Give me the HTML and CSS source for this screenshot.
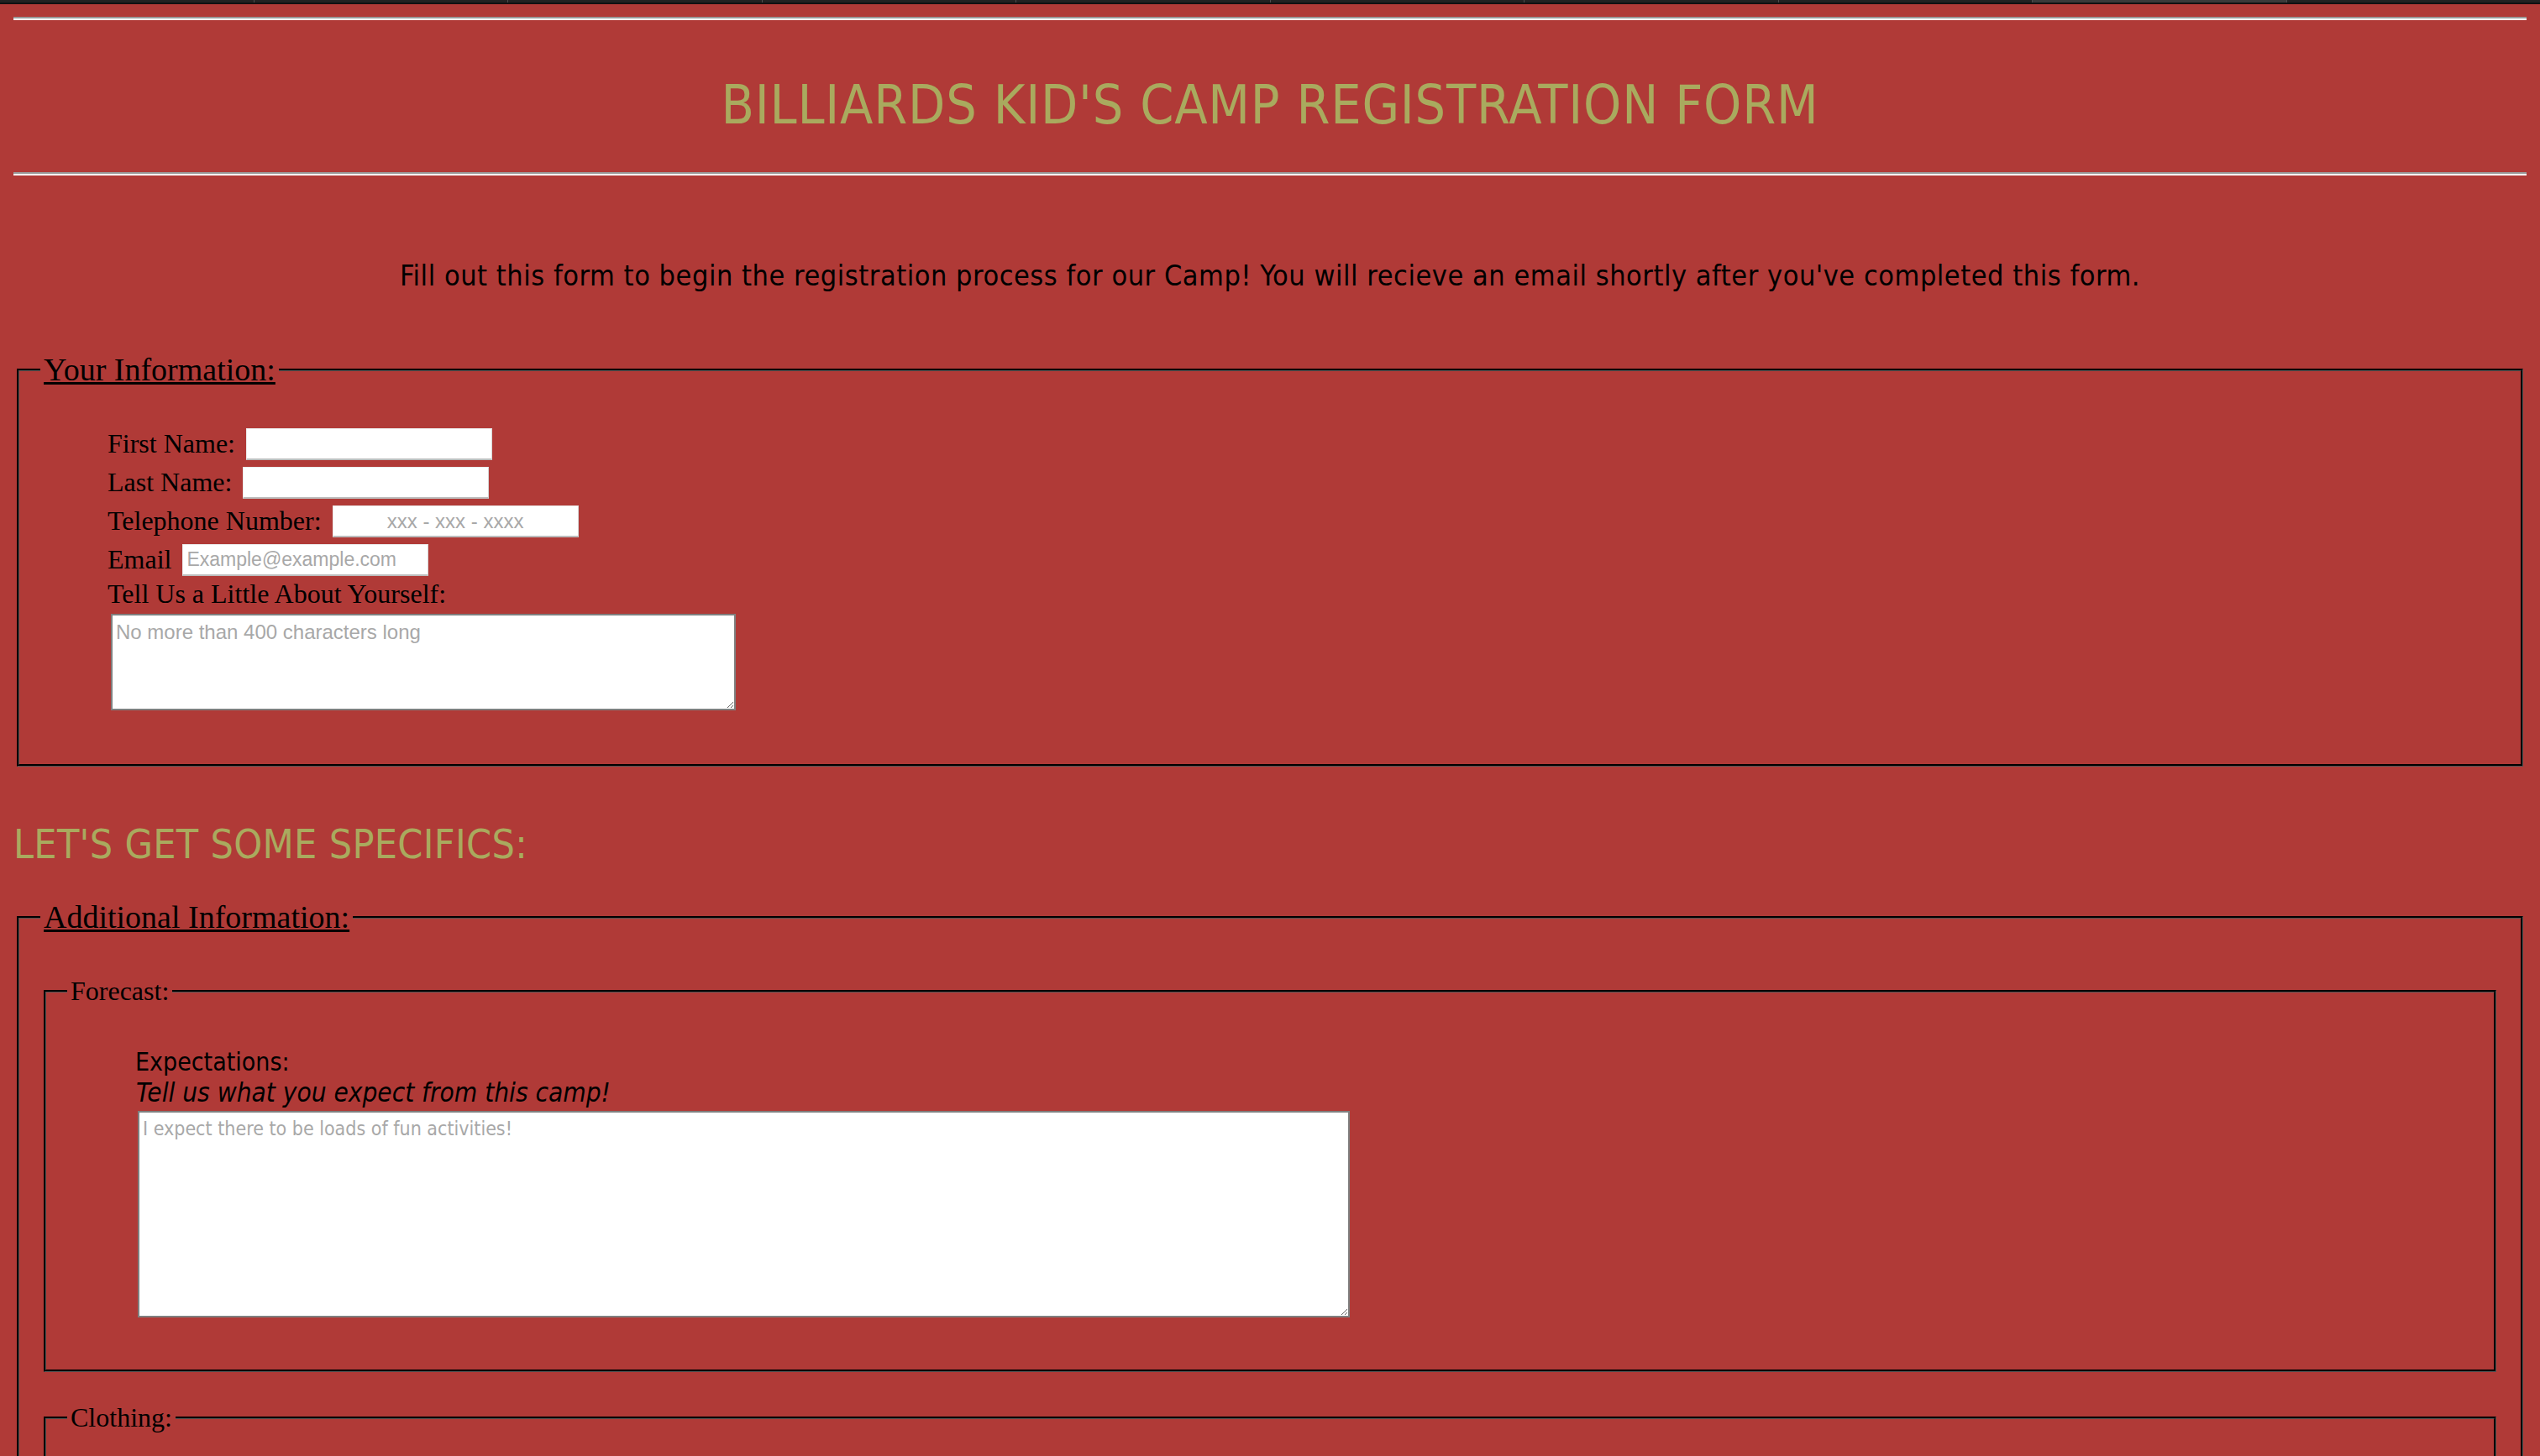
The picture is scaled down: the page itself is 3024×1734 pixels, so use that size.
FILE: index.html
```html
<!DOCTYPE html>
<html lang="en">
<head>
<meta charset="utf-8">
<title>Billiards Kid's Camp Registration Form</title>
<link rel="stylesheet" href="styles.css">
</head>
<body>
<div class="tabstrip">
  <span class="tab"></span><span class="tab"></span><span class="tab"></span><span class="tab"></span><span class="tab"></span>
  <span class="tab"></span><span class="tab"></span><span class="tab"></span><span class="tab tab-active"></span><span class="tab"></span>
</div>
<div class="page">
  <hr class="rule rule-top">
  <h1 class="title">BILLIARDS KID'S CAMP REGISTRATION FORM</h1>
  <hr class="rule">
  <p class="intro">Fill out this form to begin the registration process for our Camp! You will recieve an email shortly after you've completed this form.</p>

  <form class="form">
    <fieldset class="group group-info">
      <legend class="group-title">Your Information:</legend>
      <div class="fields">
        <div class="row"><label class="lbl" for="fname">First Name:</label><input class="box" id="fname" type="text"></div>
        <div class="row"><label class="lbl" for="lname">Last Name:</label><input class="box" id="lname" type="text"></div>
        <div class="row"><label class="lbl" for="tel">Telephone Number:</label><input class="box box-center" id="tel" type="tel" placeholder="xxx - xxx - xxxx"></div>
        <div class="row"><label class="lbl" for="email">Email</label><input class="box" id="email" type="email" placeholder="Example@example.com"></div>
        <label class="lbl lbl-block" for="about">Tell Us a Little About Yourself:</label>
        <textarea class="about" id="about" placeholder="No more than 400 characters long"></textarea>
      </div>
    </fieldset>

    <h2 class="subtitle">LET'S GET SOME SPECIFICS:</h2>

    <fieldset class="group group-extra">
      <legend class="group-title">Additional Information:</legend>
      <fieldset class="sub sub-forecast">
        <legend class="sub-title">Forecast:</legend>
        <div class="fields">
          <div class="q-label">Expectations:</div>
          <div class="q-hint">Tell us what you expect from this camp!</div>
          <textarea class="expect" placeholder="I expect there to be loads of fun activities!"></textarea>
        </div>
      </fieldset>
      <fieldset class="sub">
        <legend class="sub-title">Clothing:</legend>
        <div class="fields">
          <div class="q-label">T-Shirt Size:</div>
          <div class="q-hint">Pick the size that fits best!</div>
          <select class="size">
            <option>Small</option>
            <option>Medium</option>
            <option>Large</option>
          </select>
        </div>
      </fieldset>
    </fieldset>
  </form>
</div>
</body>
</html>
```

FILE: styles.css
```css
html, body {
  margin: 0;
  padding: 0;
  background: #b03a37;
}

body {
  font-family: "Liberation Serif", "Times New Roman", serif;
  color: #000;
}

.tabstrip {
  display: flex;
  height: 3px;
  background: #222222;
  border-bottom: 2px solid #111111;
}

.tab {
  flex: 1;
  border-left: 1px solid #4d4d4d;
}

.tab:first-child {
  border-left: 0;
}

.tab-active {
  background: #3a3a3a;
}

.page {
  padding: 0 16px 200px;
}

.rule {
  margin: 0;
  height: 0;
  border: 0;
  border-top: 2px solid #9a9a9a;
  border-bottom: 2px solid #ffffff;
}

.rule-top {
  margin-top: 15px;
}

.title {
  margin: 63px 0 41px;
  font-family: "DejaVu Sans Condensed", "DejaVu Sans", sans-serif;
  font-weight: normal;
  font-size: 64px;
  line-height: 77px;
  letter-spacing: 0.8px;
  color: #a9aa5e;
  text-align: center;
}

.intro {
  margin: 99px 0 71px;
  font-family: "DejaVu Sans Condensed", "DejaVu Sans", sans-serif;
  font-size: 34px;
  line-height: 40px;
  letter-spacing: 0.53px;
  text-align: center;
}

.form {
  margin: 0;
}

.group {
  margin: 0 4px;
  padding: 49px 25px 64px;
  border: 3px groove #000;
  min-width: 0;
}

.group-title {
  padding: 0 4px;
  font-size: 38px;
  line-height: 42px;
  text-decoration: underline;
}

.fields {
  margin-left: 80px;
}

.row {
  display: flex;
  align-items: center;
  gap: 13px;
  height: 38px;
  margin-bottom: 8px;
}

.row .lbl {
  padding-bottom: 3px;
}

.lbl {
  font-size: 32px;
  line-height: 36px;
}

.lbl-block {
  display: block;
  margin-top: -5px;
}

.box {
  box-sizing: border-box;
  width: 293px;
  height: 38px;
  margin: 0;
  padding: 0 4px;
  background: #fff;
  border: 1px solid #ececec;
  border-right-color: #d6d6d6;
  border-bottom: 2px solid #bdbdbd;
  font-family: "Liberation Sans", Arial, sans-serif;
  font-size: 23px;
  outline: none;
}

.box-center {
  text-align: center;
  font-size: 24px;
}

.box::placeholder,
.about::placeholder {
  color: #a8a8a8;
}

.about {
  display: block;
  box-sizing: border-box;
  width: 744px;
  height: 115px;
  margin: 6px 0 0 4px;
  padding: 6px 4px;
  border: 2px solid #7f7f7f;
  background: #fff;
  font-family: "Liberation Sans", Arial, sans-serif;
  font-size: 24px;
}

.subtitle {
  margin: 64px 0 38px;
  font-family: "DejaVu Sans Condensed", "DejaVu Sans", sans-serif;
  font-weight: normal;
  font-size: 48px;
  line-height: 56px;
  letter-spacing: 0.3px;
  color: #a9aa5e;
}

.group-extra {
  padding-bottom: 0;
}

.sub {
  margin: 0 4px;
  padding: 50px 25px 62px;
  border: 3px groove #000;
  min-width: 0;
}

.sub-forecast {
  margin-bottom: 36px;
}

.sub-title {
  padding: 0 4px;
  font-size: 32px;
  line-height: 36px;
}

.q-label {
  margin-left: 1px;
  font-family: "DejaVu Sans Condensed", "DejaVu Sans", sans-serif;
  font-size: 30px;
  line-height: 33px;
}

.q-hint {
  margin-top: 2px;
  margin-left: 2px;
  font-family: "DejaVu Sans Condensed", "DejaVu Sans", sans-serif;
  font-style: italic;
  font-size: 31.3px;
  line-height: 37px;
}

.expect {
  display: block;
  box-sizing: border-box;
  width: 1443px;
  height: 246px;
  margin: 3px 0 0 4px;
  padding: 6px 4px;
  border: 2px solid #7f7f7f;
  background: #fff;
  font-family: "DejaVu Sans Condensed", "DejaVu Sans", sans-serif;
  font-size: 23px;
}

.expect::placeholder {
  color: #a8a8a8;
}

.size {
  margin: 6px 0 0 4px;
  font-size: 26px;
}
```
